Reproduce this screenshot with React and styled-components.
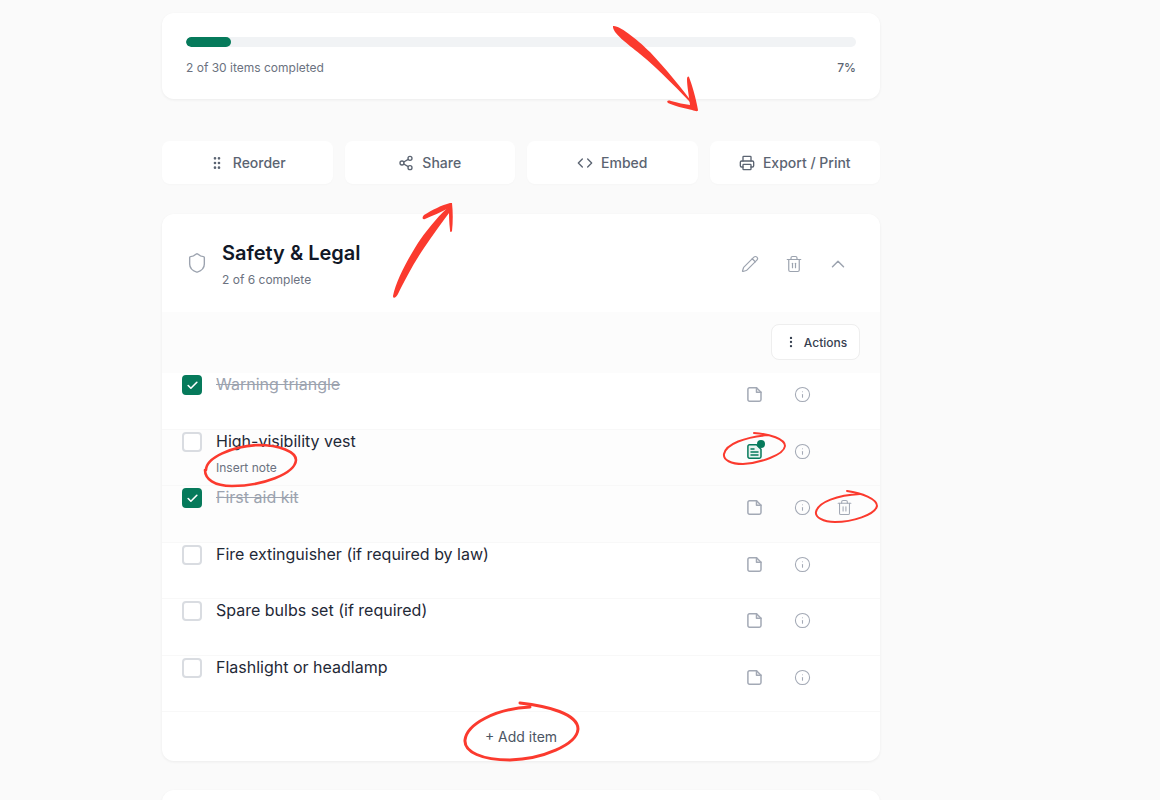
import React from "react";
import styled, { createGlobalStyle } from "styled-components";
import {
  ChevronUp,
  Code,
  EllipsisVertical,
  GripVertical,
  Info,
  Pencil,
  Printer,
  Share2,
  Shield,
  Trash2,
  Check,
} from "lucide-react";

const GlobalStyle = createGlobalStyle`
  html, body {
    margin: 0;
    padding: 0;
    background: #fafafa;
    font-family: "Inter", "Liberation Sans", sans-serif;
  }
  * { box-sizing: border-box; }
`;

const Page = styled.div`
  position: relative;
  width: 1160px;
  height: 800px;
  overflow: hidden;
  padding: 13px 280px 0 162px;
  display: flex;
  flex-direction: column;
`;

const Card = styled.section`
  flex: none;
  background: #fff;
  border-radius: 12px;
  box-shadow: 0 1px 3px rgba(0, 0, 0, 0.06);
`;

const ProgressCard = styled(Card)`
  height: 86px;
  padding: 24px 24px 0;
`;

const Track = styled.div`
  height: 10px;
  border-radius: 5px;
  background: #f1f3f5;
  overflow: hidden;
`;

const Fill = styled.div`
  height: 100%;
  border-radius: 5px;
  background: #067a5b;
`;

const ProgressInfo = styled.div`
  display: flex;
  justify-content: space-between;
  margin-top: 13px;
  font-size: 12px;
  line-height: 16px;
  color: #6b7280;
`;

const Percent = styled.span`
  font-weight: 500;
  color: #5b6472;
`;

const Toolbar = styled.div`
  flex: none;
  display: grid;
  grid-template-columns: repeat(4, 1fr);
  gap: 12px;
  margin-top: 42px;
`;

const ToolButton = styled.button`
  height: 43px;
  display: flex;
  align-items: center;
  justify-content: center;
  gap: 8px;
  border: 0;
  border-radius: 8px;
  background: #fff;
  box-shadow: 0 1px 2px rgba(0, 0, 0, 0.02);
  font: 500 14px "Inter", sans-serif;
  color: #5b6472;
`;

const SectionCard = styled(Card)`
  margin-top: 30px;
  height: 547px;
  display: flex;
  flex-direction: column;
`;

const SectionHeader = styled.header`
  height: 98px;
  flex: none;
  display: flex;
  align-items: flex-start;
  padding: 25px 20px 0 24px;
`;

const ShieldSlot = styled.div`
  width: 36px;
  padding-top: 13px;
  color: #9ca3af;
`;

const Title = styled.h2`
  margin: 0;
  font-size: 20px;
  line-height: 28px;
  font-weight: 600;
  color: #111827;
`;

const Subtitle = styled.div`
  margin-top: 5px;
  font-size: 12px;
  line-height: 16px;
  color: #6b7280;
`;

const HeaderActions = styled.div`
  margin-left: auto;
  padding: 14px 0 0;
  display: grid;
  grid-template-columns: 44px 44px 44px;
  justify-items: center;
  align-items: center;
  color: #9ca3af;
`;

const ActionBar = styled.div`
  height: 61px;
  flex: none;
  display: flex;
  justify-content: flex-end;
  align-items: flex-start;
  padding: 12px 20px 0 0;
  background: #fcfcfc;
`;

const ActionsButton = styled.button`
  width: 89px;
  height: 36px;
  display: flex;
  align-items: center;
  justify-content: center;
  gap: 6px;
  border: 1px solid #eeeeee;
  border-radius: 8px;
  background: #fff;
  font: 500 12px "Inter", sans-serif;
  color: #374151;
`;

const Row = styled.div`
  height: 56.5px;
  flex: none;
  display: flex;
  align-items: flex-start;
  padding: 2px 18px 0 20px;
  background: ${(p) => (p.$shaded ? "#fdfdfd" : "#fff")};
  border-bottom: 1px solid #f8f8f8;
`;

const CheckBox = styled.span`
  width: 20px;
  height: 20px;
  flex: none;
  display: flex;
  align-items: center;
  justify-content: center;
  border-radius: 4px;
  border: 2px solid ${(p) => (p.$checked ? "#067a5b" : "#d9dce1")};
  background: ${(p) => (p.$checked ? "#067a5b" : "#fff")};
  color: #fff;
`;

const ItemBody = styled.div`
  margin-left: 14px;
  margin-top: -1px;
`;

const ItemName = styled.div`
  font-size: 16px;
  line-height: 20px;
  color: ${(p) => (p.$done ? "#9ca3af" : "#1f2937")};
  text-decoration: ${(p) => (p.$done ? "line-through" : "none")};
`;

const ItemNote = styled.div`
  margin-top: 10px;
  font-size: 12px;
  line-height: 14px;
  color: #6b7280;
`;

const RowIcons = styled.div`
  margin-left: auto;
  padding-top: 11px;
  display: grid;
  grid-template-columns: 48px 48px 36px;
  justify-items: center;
  align-items: center;
  color: #a3a9b5;
`;

const NoteIcon = styled.span`
  position: relative;
  display: flex;
  color: ${(p) => (p.$active ? "#067a5b" : "#a3a9b5")};
`;

const NoteDot = styled.span`
  position: absolute;
  top: -3px;
  right: -2px;
  width: 8px;
  height: 8px;
  border-radius: 50%;
  background: #067a5b;
`;

const SectionFooter = styled.div`
  flex: 1;
  display: flex;
  align-items: center;
  justify-content: center;
  padding-bottom: 1px;
  font-size: 14px;
  color: #4b5563;
`;

const NextCard = styled(Card)`
  margin-top: 29px;
  height: 80px;
`;

const Annotations = styled.svg`
  position: absolute;
  inset: 0;
  pointer-events: none;
`;

// the note icon is squarer than lucide's File, so it is drawn here
const NoteGlyph = ({ filled }) => (
  <svg
    width="17"
    height="17"
    viewBox="0 0 17 17"
    fill={filled ? "rgba(6,122,91,0.08)" : "none"}
    stroke="currentColor"
    strokeWidth="1.5"
    strokeLinejoin="round"
    strokeLinecap="round"
  >
    <path d="M3.5 1.8 H10.5 L15 6.2 V13.6 A1.6 1.6 0 0 1 13.4 15.2 H3.5 A1.6 1.6 0 0 1 1.9 13.6 V3.4 A1.6 1.6 0 0 1 3.5 1.8 Z" />
    {filled ? (
      <path d="M5 6 H8 M5 9 H12 M5 12 H12" />
    ) : (
      <path d="M10.5 1.8 V6.2 H15" />
    )}
  </svg>
);

const items = [
  { name: "Warning triangle", done: true },
  { name: "High-visibility vest", note: "Insert note", activeNote: true, shaded: true },
  { name: "First aid kit", done: true, trash: true, shaded: true },
  { name: "Fire extinguisher (if required by law)" },
  { name: "Spare bulbs set (if required)" },
  { name: "Flashlight or headlamp" },
];

const tools = [
  { label: "Reorder", Icon: GripVertical },
  { label: "Share", Icon: Share2 },
  { label: "Embed", Icon: Code },
  { label: "Export / Print", Icon: Printer },
];

const App = () => {
  return (
    <Page>
      <GlobalStyle />
      <ProgressCard>
        <Track>
          <Fill style={{ width: `${(2 / 30) * 100}%` }} />
        </Track>
        <ProgressInfo>
          <span>2 of 30 items completed</span>
          <Percent>7%</Percent>
        </ProgressInfo>
      </ProgressCard>

      <Toolbar>
        {tools.map(({ label, Icon }) => (
          <ToolButton key={label}>
            <Icon size={16} strokeWidth={2} />
            {label}
          </ToolButton>
        ))}
      </Toolbar>

      <SectionCard>
        <SectionHeader>
          <ShieldSlot>
            <Shield size={22} strokeWidth={1.5} />
          </ShieldSlot>
          <div>
            <Title>Safety &amp; Legal</Title>
            <Subtitle>2 of 6 complete</Subtitle>
          </div>
          <HeaderActions>
            <Pencil size={18} strokeWidth={1.6} />
            <Trash2 size={18} strokeWidth={1.6} />
            <ChevronUp size={22} strokeWidth={1.6} />
          </HeaderActions>
        </SectionHeader>

        <ActionBar>
          <ActionsButton>
            <EllipsisVertical size={14} />
            Actions
          </ActionsButton>
        </ActionBar>

        {items.map((item) => (
          <Row key={item.name} $shaded={item.shaded}>
            <CheckBox $checked={item.done}>
              {item.done && <Check size={13} strokeWidth={3} />}
            </CheckBox>
            <ItemBody>
              <ItemName $done={item.done}>{item.name}</ItemName>
              {item.note && <ItemNote>{item.note}</ItemNote>}
            </ItemBody>
            <RowIcons>
              <NoteIcon $active={item.activeNote}>
                <NoteGlyph filled={item.activeNote} />
                {item.activeNote && <NoteDot />}
              </NoteIcon>
              <Info size={17} strokeWidth={1.5} />
              {item.trash ? <Trash2 size={17} strokeWidth={1.5} /> : <span />}
            </RowIcons>
          </Row>
        ))}

        <SectionFooter>+ Add item</SectionFooter>
      </SectionCard>

      <NextCard />

      <Annotations width="1160" height="800" viewBox="0 0 1160 800">
        <g fill="#fb3a2e">
          <path d="M613 26 C620 25 640 42 650 52 C665 68 682 88 697 109 C680 92 660 70 640 54 C628 44 612 33 613 26 Z" />
          <path d="M689 77 C692 85 696 98 698 110 C698 112 695 111 692 110 C684 108 674 106 668 103 C666 101 668 100 671 101 C678 103 684 104 690 105 C689 96 687 86 687 79 C687 76 689 76 689 77 Z" />
          <path d="M393 296 C396 280 410 255 420 240 C430 226 440 214 451 205 L452 209 C442 222 432 236 424 248 C413 264 404 282 398 294 C396 298 393 299 393 296 Z" />
          <path d="M452 203 C453 212 453 222 452 231 C451 233 450 232 450 230 C449 222 449 215 449 208 C441 212 432 216 425 219 C422 220 422 217 424 215 C432 210 442 205 450 203 Z" />
        </g>
        <g fill="none" stroke="#fb3a2e" strokeLinecap="round">
          <path strokeWidth="2.6" d="M206 470 C206 458 232 446 258 445 C280 445 296 452 296 460 C295 474 262 486 232 486 C214 486 205 479 205 470" />
          <path strokeWidth="2" d="M754 433 C770 434 785 439 785 446 C784 455 760 463 743 464 C731 464 723 460 724 454 C726 444 745 437 768 435" />
          <path strokeWidth="2" d="M847 491 C862 493 877 499 877 506 C875 515 852 522 835 522 C823 522 815 517 816 512 C818 502 838 495 860 494" />
          <path strokeWidth="3" d="M520 703 C548 706 578 714 578 729 C577 745 542 759 510 760 C482 760 464 752 465 740 C467 724 495 709 530 707" />
        </g>
      </Annotations>
    </Page>
  );
};

export default App;
